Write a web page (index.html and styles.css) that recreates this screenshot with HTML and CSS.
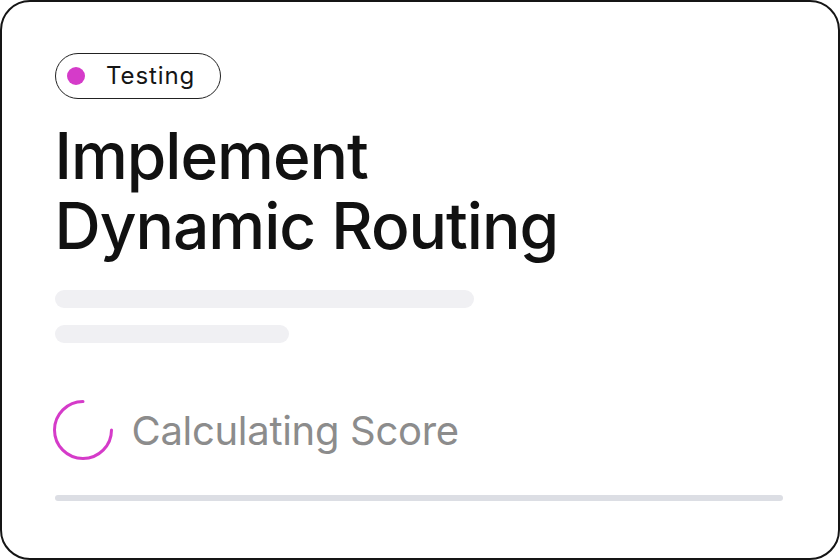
FILE: index.html
```html
<!DOCTYPE html>
<html lang="en">
<head>
    <meta charset="UTF-8">
    <meta name="viewport" content="width=device-width, initial-scale=1.0">
    <title>Implement Dynamic Routing</title>
    <link rel="stylesheet" href="styles.css">
</head>
<body>

    <div class="card">
        <!-- Status badge -->
        <div class="badge">
            <span class="badge-dot"></span>
            <span class="badge-text">Testing</span>
        </div>

        <h1 class="title">Implement<br>Dynamic Routing</h1>

        <!-- Skeleton lines -->
        <div class="skeleton">
            <div class="skeleton-line long"></div>
            <div class="skeleton-line short"></div>
        </div>

        <!-- Score loading -->
        <div class="score">
            <svg class="spinner" width="60" height="60" viewBox="0 0 60 60">
                <path d="M30 1.5 A28.5 28.5 0 1 0 58.5 30" fill="none" stroke="#d53bc9" stroke-width="3" stroke-linecap="round"/>
            </svg>
            <span class="score-text">Calculating Score</span>
        </div>

        <div class="progress"></div>
    </div>

</body>
</html>
```

FILE: styles.css
```css
/* Page and card */
body {
    margin: 0;
    background: #ffffff;
    font-family: Inter, "Noto Sans", sans-serif;
}

.card {
    box-sizing: border-box;
    width: 840px;
    height: 560px;
    border: 2.5px solid #151515;
    border-radius: 30px;
    background: #ffffff;
    padding: 50.5px 55.5px 0 52.5px;
    display: flex;
    flex-direction: column;
    align-items: flex-start;
}

/* Status badge */
.badge {
    box-sizing: border-box;
    height: 46px;
    width: 166px;
    border: 1.5px solid #222222;
    border-radius: 23px;
    display: flex;
    align-items: center;
    padding-left: 11.5px;
}

.badge-dot {
    width: 18px;
    height: 18px;
    border-radius: 50%;
    background: #d53bc9;
}

.badge-text {
    margin-left: 21px;
    font-size: 24px;
    color: #151515;
    letter-spacing: 0.9px;
}

/* Title */
.title {
    margin: 22px 0 0 0;
    font-size: 64px;
    line-height: 70px;
    font-weight: 500;
    color: #111111;
    letter-spacing: -1px;
}

/* Skeleton placeholders */
.skeleton {
    margin-top: 29px;
    display: flex;
    flex-direction: column;
    gap: 17px;
}

.skeleton-line {
    height: 18px;
    border-radius: 9px;
    background: #f0f0f3;
}

.skeleton-line.long { width: 419px; }
.skeleton-line.short { width: 234px; }

/* Score row */
.score {
    margin: 57px 0 0 -2px;
    display: flex;
    align-items: center;
    gap: 19px;
}

.spinner {
    display: block;
}

.score-text {
    font-size: 40px;
    color: #8c8c8c;
    margin-top: 2px;
    letter-spacing: -0.3px;
}

/* Bottom progress track */
.progress {
    margin-top: 35px;
    align-self: stretch;
    height: 6px;
    border-radius: 3px;
    background: #dcdee4;
}
```
